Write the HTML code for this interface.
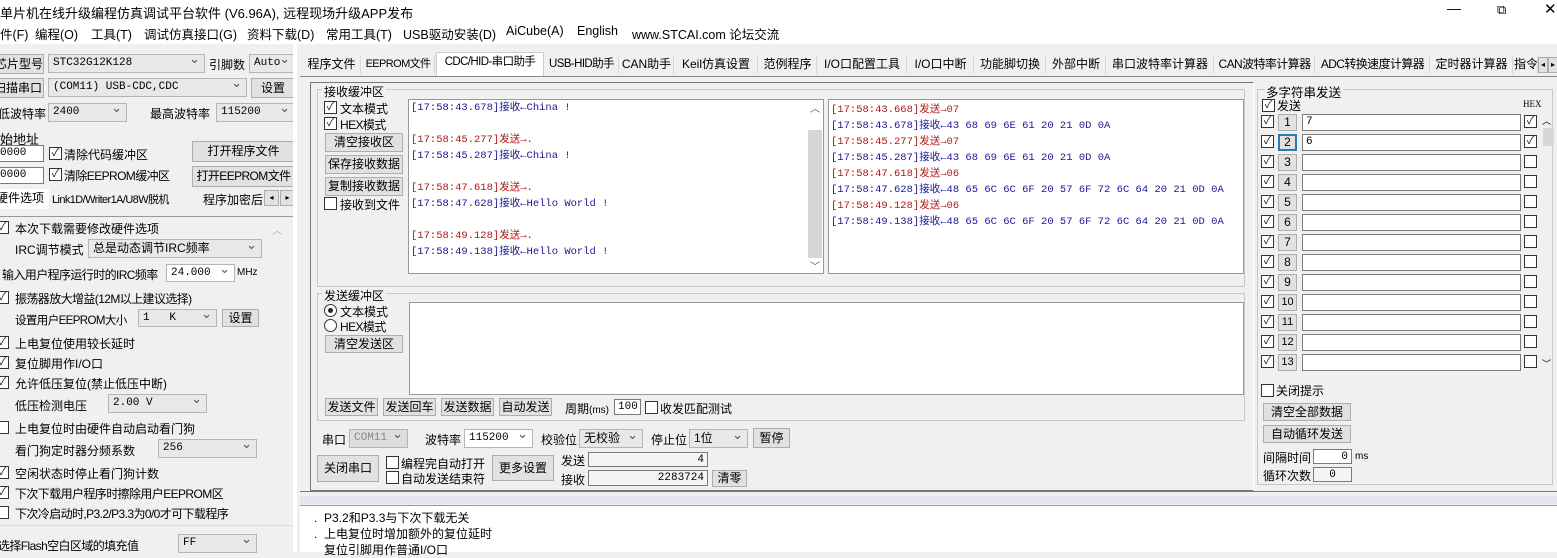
<!DOCTYPE html>
<html><head><meta charset="utf-8"><style>
*{margin:0;padding:0;box-sizing:border-box}
body{width:1557px;height:552px;overflow:hidden;background:#f0f0f0;font-family:"Liberation Sans","Noto Sans CJK SC",sans-serif;font-size:12px;color:#000;position:relative}
.a{position:absolute;white-space:nowrap}
.btn{position:absolute;background:#e1e1e1;border:1px solid #adadad;text-align:center;white-space:nowrap;line-height:16px}
.cb{position:absolute;width:13px;height:13px;border:1px solid #333;background:#fff;font-size:11px;line-height:11px;text-align:center;color:#222}
.sel{position:absolute;background:#e8e8e8;border:1px solid #b5b5b5;padding-left:4px;line-height:17px;white-space:nowrap;font-family:"Liberation Mono","Noto Sans CJK SC",monospace;font-size:11px}
.sel:after{content:"⌄";position:absolute;right:4px;top:-4px;font-size:13px;color:#555}
.inp{position:absolute;background:#fff;border:1px solid #7a7a7a;line-height:14px;white-space:nowrap;font-family:"Liberation Mono",monospace;font-size:11px;padding:0 3px}
.tab{position:absolute;top:55px;height:19px;line-height:19px;background:#f0f0f0;border-right:1px solid #d8d8d8;text-align:center;white-space:nowrap}
.mono{font-family:"Liberation Mono","Noto Sans CJK SC",monospace;font-size:10.5px}
.r{color:#b01818}.b{color:#1a1a90}
.grp{position:absolute;border:1px solid #c8c8c8}
.n{letter-spacing:-0.6px}
</style></head><body>
<div class="a" style="left:0;top:0;width:1557px;height:44px;background:#fff"></div>
<div class="a" style="left:0;top:3px;font-size:13px">单片机在线升级编程仿真调试平台软件 (V6.96A), 远程现场升级APP发布</div>
<div class="a" style="left:1447px;top:0;font-size:14px">—</div>
<div class="a" style="left:1497px;top:2px;font-size:13px">⧉</div>
<div class="a" style="left:1544px;top:0;font-size:15px">✕</div>
<div class="a" style="left:0;top:24px;font-size:12.5px">件(F)</div>
<div class="a" style="left:35px;top:24px;font-size:12.5px">编程(O)</div>
<div class="a" style="left:91px;top:24px;font-size:12.5px">工具(T)</div>
<div class="a" style="left:144px;top:24px;font-size:12.5px">调试仿真接口(G)</div>
<div class="a" style="left:247px;top:24px;font-size:12.5px">资料下载(D)</div>
<div class="a" style="left:326px;top:24px;font-size:12.5px">常用工具(T)</div>
<div class="a" style="left:403px;top:24px;font-size:12.5px">USB驱动安装(D)</div>
<div class="a" style="left:506px;top:24px;font-size:12.5px">AiCube(A)</div>
<div class="a" style="left:577px;top:24px;font-size:12.5px">English</div>
<div class="a" style="left:632px;top:24px;font-size:12.5px">www.STCAI.com 论坛交流</div>

<!-- left panel -->
<div class="btn" style="left:-6px;top:54px;width:50px;height:20px;line-height:18px;font-size:12px">芯片型号</div>
<div class="sel" style="left:48px;top:54px;width:157px;height:19px">STC32G12K128</div>
<div class="a" style="left:209px;top:56px">引脚数</div>
<div class="sel" style="left:249px;top:54px;width:46px;height:19px">Auto</div>
<div class="btn" style="left:-8px;top:78px;width:52px;height:20px;line-height:18px">扫描串口</div>
<div class="sel" style="left:48px;top:78px;width:199px;height:19px">(COM11) USB-CDC,CDC</div>
<div class="btn" style="left:251px;top:78px;width:44px;height:20px;line-height:18px">设置</div>
<div class="a" style="left:-2px;top:105px">低波特率</div>
<div class="sel" style="left:48px;top:103px;width:79px;height:19px">2400</div>
<div class="a" style="left:150px;top:105px">最高波特率</div>
<div class="sel" style="left:216px;top:103px;width:79px;height:19px">115200</div>
<div class="a" style="left:0;top:129px;font-size:13px">始地址</div>
<div class="inp" style="left:-4px;top:145px;width:48px;height:17px;line-height:15px">0000</div>
<div class="cb" style="left:49px;top:147px">✓</div><div class="a" style="left:64px;top:146px">清除代码缓冲区</div>
<div class="btn" style="left:192px;top:141px;width:103px;height:21px;line-height:19px">打开程序文件</div>
<div class="inp" style="left:-4px;top:167px;width:48px;height:17px;line-height:15px">0000</div>
<div class="cb" style="left:49px;top:168px">✓</div><div class="a n" style="left:64px;top:167px">清除EEPROM缓冲区</div>
<div class="btn n" style="left:192px;top:166px;width:103px;height:21px;line-height:19px">打开EEPROM文件</div>
<div class="a" style="left:0;top:189px;width:49px;height:20px;background:#fff;line-height:19px;overflow:hidden"><span style="margin-left:-4px">硬件选项</span></div>
<div class="a n" style="left:52px;top:191px;font-size:11px">Link1D/Writer1A/U8W脱机</div>
<div class="a" style="left:203px;top:191px;width:60px;overflow:hidden">程序加密后</div>
<div class="btn" style="left:264px;top:190px;width:15px;height:16px;font-size:8px;line-height:14px">◂</div>
<div class="btn" style="left:280px;top:190px;width:15px;height:16px;font-size:8px;line-height:14px">▸</div>
<div class="grp" style="left:-2px;top:216px;width:297px;height:310px;border-color:#999 #ddd #ddd #999"></div>
<div class="a" style="left:272px;top:222px;color:#aaa;font-size:10px">︿</div>
<div class="cb" style="left:-4px;top:221px">✓</div><div class="a" style="left:15px;top:220px">本次下载需要修改硬件选项</div>
<div class="a" style="left:15px;top:241px">IRC调节模式</div>
<div class="sel" style="left:88px;top:239px;width:174px;height:19px;font-family:'Liberation Sans','Noto Sans CJK SC',sans-serif;font-size:12px">总是动态调节IRC频率</div>
<div class="a n" style="left:2px;top:266px">输入用户程序运行时的IRC频率</div>
<div class="sel" style="left:166px;top:264px;width:69px;height:18px;background:#fff">24.000</div>
<div class="a" style="left:237px;top:267px;font-size:10px">MHz</div>
<div class="cb" style="left:-4px;top:291px">✓</div><div class="a n" style="left:15px;top:290px">振荡器放大增益(12M以上建议选择)</div>
<div class="a n" style="left:15px;top:312px;font-size:11.5px">设置用户EEPROM大小</div>
<div class="sel" style="left:138px;top:309px;width:79px;height:18px">1&nbsp;&nbsp; K</div>
<div class="btn" style="left:222px;top:309px;width:37px;height:18px">设置</div>
<div class="cb" style="left:-4px;top:336px">✓</div><div class="a" style="left:15px;top:335px">上电复位使用较长延时</div>
<div class="cb" style="left:-4px;top:356px">✓</div><div class="a" style="left:15px;top:355px">复位脚用作I/O口</div>
<div class="cb" style="left:-4px;top:376px">✓</div><div class="a" style="left:15px;top:375px">允许低压复位(禁止低压中断)</div>
<div class="a" style="left:15px;top:397px">低压检测电压</div>
<div class="sel" style="left:108px;top:394px;width:99px;height:19px">2.00 V</div>
<div class="cb" style="left:-4px;top:421px"></div><div class="a" style="left:15px;top:420px">上电复位时由硬件自动启动看门狗</div>
<div class="a" style="left:15px;top:442px">看门狗定时器分频系数</div>
<div class="sel" style="left:158px;top:439px;width:99px;height:19px">256</div>
<div class="cb" style="left:-4px;top:466px">✓</div><div class="a" style="left:15px;top:465px">空闲状态时停止看门狗计数</div>
<div class="cb" style="left:-4px;top:486px">✓</div><div class="a n" style="left:15px;top:485px">下次下载用户程序时擦除用户EEPROM区</div>
<div class="cb" style="left:-4px;top:506px"></div><div class="a n" style="left:15px;top:505px">下次冷启动时,P3.2/P3.3为0/0才可下载程序</div>
<div class="a n" style="left:-2px;top:537px">选择Flash空白区域的填充值</div>
<div class="sel" style="left:178px;top:534px;width:79px;height:19px">FF</div>
<div class="a" style="left:293px;top:44px;width:4px;height:508px;background:#fff"></div>

<!-- tabs -->
<div class="a" style="left:300px;top:76px;width:1257px;height:1px;background:#888"></div>
<div class="tab" style="left:303px;width:58px">程序文件</div>
<div class="tab n" style="left:362px;width:73px;font-size:11px">EEPROM文件</div>
<div class="tab n" style="left:436px;top:52px;height:24px;width:108px;background:#fff;border:1px solid #ccc;border-bottom:none;font-size:11.5px">CDC/HID-串口助手</div>
<div class="tab n" style="left:545px;width:74px;font-size:11.5px">USB-HID助手</div>
<div class="tab" style="left:620px;width:54px">CAN助手</div>
<div class="tab" style="left:675px;width:83px">Keil仿真设置</div>
<div class="tab" style="left:759px;width:58px">范例程序</div>
<div class="tab" style="left:818px;width:89px">I/O口配置工具</div>
<div class="tab" style="left:908px;width:66px">I/O口中断</div>
<div class="tab" style="left:975px;width:71px">功能脚切换</div>
<div class="tab" style="left:1047px;width:59px">外部中断</div>
<div class="tab" style="left:1107px;width:107px">串口波特率计算器</div>
<div class="tab n" style="left:1215px;width:100px">CAN波特率计算器</div>
<div class="tab n" style="left:1316px;width:114px">ADC转换速度计算器</div>
<div class="tab" style="left:1431px;width:82px">定时器计算器</div>
<div class="tab" style="left:1514px;width:24px;overflow:hidden">指令</div>
<div class="btn" style="left:1538px;top:57px;width:10px;height:16px;font-size:8px;line-height:14px">◂</div>
<div class="btn" style="left:1548px;top:57px;width:10px;height:16px;font-size:8px;line-height:14px">▸</div>

<!-- main frame -->
<div class="grp" style="left:310px;top:82px;width:944px;height:409px;border-color:#777 #fff #777 #777"></div>
<div class="grp" style="left:317px;top:89px;width:928px;height:198px"></div>
<div class="a" style="left:322px;top:83px;background:#f0f0f0;padding:0 2px">接收缓冲区</div>
<div class="cb" style="left:324px;top:101px">✓</div><div class="a" style="left:340px;top:100px">文本模式</div>
<div class="cb" style="left:324px;top:117px">✓</div><div class="a n" style="left:340px;top:116px">HEX模式</div>
<div class="btn" style="left:325px;top:133px;width:78px;height:19px">清空接收区</div>
<div class="btn" style="left:325px;top:155px;width:78px;height:19px">保存接收数据</div>
<div class="btn" style="left:325px;top:177px;width:78px;height:19px">复制接收数据</div>
<div class="cb" style="left:324px;top:197px"></div><div class="a" style="left:340px;top:196px">接收到文件</div>
<div class="a" style="left:408px;top:99px;width:416px;height:175px;background:#fff;border:1px solid #999"></div>
<div class="a" style="left:808px;top:130px;width:14px;height:128px;background:#d6d6d6"></div>
<div class="a" style="left:810px;top:100px;font-size:10px;color:#555">︿</div>
<div class="a" style="left:810px;top:258px;font-size:10px;color:#555">﹀</div>
<div class="a mono" style="left:411px;top:100px;line-height:16px">
<span class="b">[17:58:43.678]接收←China !</span><br><br>
<span class="r">[17:58:45.277]发送→.</span><br><span class="b">[17:58:45.287]接收←China !</span><br><br>
<span class="r">[17:58:47.618]发送→.</span><br><span class="b">[17:58:47.628]接收←Hello World !</span><br><br>
<span class="r">[17:58:49.128]发送→.</span><br><span class="b">[17:58:49.138]接收←Hello World !</span></div>
<div class="a" style="left:828px;top:99px;width:416px;height:175px;background:#fff;border:1px solid #999"></div>
<div class="a mono" style="left:831px;top:102px;line-height:16px">
<span class="r">[17:58:43.668]发送→07</span><br><span class="b">[17:58:43.678]接收←43 68 69 6E 61 20 21 0D 0A</span><br>
<span class="r">[17:58:45.277]发送→07</span><br><span class="b">[17:58:45.287]接收←43 68 69 6E 61 20 21 0D 0A</span><br>
<span class="r">[17:58:47.618]发送→06</span><br><span class="b">[17:58:47.628]接收←48 65 6C 6C 6F 20 57 6F 72 6C 64 20 21 0D 0A</span><br>
<span class="r">[17:58:49.128]发送→06</span><br><span class="b">[17:58:49.138]接收←48 65 6C 6C 6F 20 57 6F 72 6C 64 20 21 0D 0A</span></div>

<div class="grp" style="left:317px;top:293px;width:928px;height:128px"></div>
<div class="a" style="left:322px;top:287px;background:#f0f0f0;padding:0 2px">发送缓冲区</div>
<div class="a" style="left:324px;top:304px;width:13px;height:13px;border:1px solid #333;border-radius:50%;background:#fff"><div style="margin:3px;width:5px;height:5px;border-radius:50%;background:#222"></div></div><div class="a" style="left:340px;top:303px">文本模式</div>
<div class="a" style="left:324px;top:319px;width:13px;height:13px;border:1px solid #333;border-radius:50%;background:#fff"></div><div class="a n" style="left:340px;top:318px">HEX模式</div>
<div class="btn" style="left:325px;top:335px;width:78px;height:18px">清空发送区</div>
<div class="a" style="left:409px;top:302px;width:835px;height:93px;background:#fff;border:1px solid #999"></div>
<div class="btn" style="left:325px;top:398px;width:53px;height:18px">发送文件</div>
<div class="btn" style="left:383px;top:398px;width:53px;height:18px">发送回车</div>
<div class="btn" style="left:441px;top:398px;width:53px;height:18px">发送数据</div>
<div class="btn" style="left:499px;top:398px;width:53px;height:18px">自动发送</div>
<div class="a" style="left:565px;top:400px">周期<span style="font-size:10px">(ms)</span></div>
<div class="inp" style="left:614px;top:399px;width:27px;height:16px;text-align:center">100</div>
<div class="cb" style="left:645px;top:401px"></div><div class="a" style="left:660px;top:400px">收发匹配测试</div>

<div class="a" style="left:322px;top:431px">串口</div>
<div class="sel" style="left:349px;top:429px;width:59px;height:19px;color:#888;background:#ddd">COM11</div>
<div class="a" style="left:425px;top:431px">波特率</div>
<div class="sel" style="left:464px;top:429px;width:69px;height:19px;background:#fff">115200</div>
<div class="a" style="left:541px;top:431px">校验位</div>
<div class="sel" style="left:579px;top:429px;width:64px;height:19px;font-family:'Liberation Sans','Noto Sans CJK SC';font-size:12px">无校验</div>
<div class="a" style="left:651px;top:431px">停止位</div>
<div class="sel" style="left:689px;top:429px;width:59px;height:19px;font-family:'Liberation Sans','Noto Sans CJK SC';font-size:12px">1位</div>
<div class="btn" style="left:753px;top:428px;width:37px;height:20px;line-height:18px">暂停</div>
<div class="btn" style="left:317px;top:455px;width:62px;height:27px;line-height:25px">关闭串口</div>
<div class="cb" style="left:386px;top:456px"></div><div class="a" style="left:401px;top:455px">编程完自动打开</div>
<div class="cb" style="left:386px;top:471px"></div><div class="a" style="left:401px;top:470px">自动发送结束符</div>
<div class="btn" style="left:492px;top:455px;width:62px;height:26px;line-height:24px">更多设置</div>
<div class="a" style="left:561px;top:452px">发送</div>
<div class="inp" style="left:588px;top:452px;width:120px;height:15px;text-align:right;background:#f4f4f4">4</div>
<div class="a" style="left:561px;top:471px">接收</div>
<div class="inp" style="left:588px;top:470px;width:120px;height:16px;text-align:right;background:#f4f4f4">2283724</div>
<div class="btn" style="left:712px;top:470px;width:35px;height:17px;line-height:15px">清零</div>

<!-- right group -->
<div class="grp" style="left:1257px;top:89px;width:296px;height:396px"></div>
<div class="a" style="left:1264px;top:82px;background:#f0f0f0;padding:0 2px;font-size:12.5px">多字符串发送</div>
<div class="cb" style="left:1262px;top:99px">✓</div><div class="a" style="left:1277px;top:97px">发送</div>
<div class="a" style="left:1523px;top:99px;font-size:9px;font-family:'Liberation Serif'">HEX</div>
<div class="a" style="left:1543px;top:128px;width:11px;height:18px;background:#d6d6d6"></div>
<div class="a" style="left:1542px;top:114px;font-size:9px">︿</div>
<div class="a" style="left:1542px;top:357px;font-size:9px">﹀</div>
<div class="cb" style="left:1261px;top:115px">✓</div><div class="btn" style="left:1278px;top:114px;width:19px;height:17px;line-height:15px">1</div><div class="inp" style="left:1302px;top:114px;width:219px;height:17px">7</div><div class="cb" style="left:1524px;top:115px">✓</div>
<div class="cb" style="left:1261px;top:135px">✓</div><div class="btn" style="left:1278px;top:134px;width:19px;height:17px;line-height:13px;border:2px solid #2a7ab0">2</div><div class="inp" style="left:1302px;top:134px;width:219px;height:17px">6</div><div class="cb" style="left:1524px;top:135px">✓</div>
<div class="cb" style="left:1261px;top:155px">✓</div><div class="btn" style="left:1278px;top:154px;width:19px;height:17px;line-height:15px">3</div><div class="inp" style="left:1302px;top:154px;width:219px;height:17px"></div><div class="cb" style="left:1524px;top:155px"></div>
<div class="cb" style="left:1261px;top:175px">✓</div><div class="btn" style="left:1278px;top:174px;width:19px;height:17px;line-height:15px">4</div><div class="inp" style="left:1302px;top:174px;width:219px;height:17px"></div><div class="cb" style="left:1524px;top:175px"></div>
<div class="cb" style="left:1261px;top:195px">✓</div><div class="btn" style="left:1278px;top:194px;width:19px;height:17px;line-height:15px">5</div><div class="inp" style="left:1302px;top:194px;width:219px;height:17px"></div><div class="cb" style="left:1524px;top:195px"></div>
<div class="cb" style="left:1261px;top:215px">✓</div><div class="btn" style="left:1278px;top:214px;width:19px;height:17px;line-height:15px">6</div><div class="inp" style="left:1302px;top:214px;width:219px;height:17px"></div><div class="cb" style="left:1524px;top:215px"></div>
<div class="cb" style="left:1261px;top:235px">✓</div><div class="btn" style="left:1278px;top:234px;width:19px;height:17px;line-height:15px">7</div><div class="inp" style="left:1302px;top:234px;width:219px;height:17px"></div><div class="cb" style="left:1524px;top:235px"></div>
<div class="cb" style="left:1261px;top:255px">✓</div><div class="btn" style="left:1278px;top:254px;width:19px;height:17px;line-height:15px">8</div><div class="inp" style="left:1302px;top:254px;width:219px;height:17px"></div><div class="cb" style="left:1524px;top:255px"></div>
<div class="cb" style="left:1261px;top:275px">✓</div><div class="btn" style="left:1278px;top:274px;width:19px;height:17px;line-height:15px">9</div><div class="inp" style="left:1302px;top:274px;width:219px;height:17px"></div><div class="cb" style="left:1524px;top:275px"></div>
<div class="cb" style="left:1261px;top:295px">✓</div><div class="btn" style="left:1278px;top:294px;width:19px;height:17px;line-height:15px;font-size:11px">10</div><div class="inp" style="left:1302px;top:294px;width:219px;height:17px"></div><div class="cb" style="left:1524px;top:295px"></div>
<div class="cb" style="left:1261px;top:315px">✓</div><div class="btn" style="left:1278px;top:314px;width:19px;height:17px;line-height:15px;font-size:11px">11</div><div class="inp" style="left:1302px;top:314px;width:219px;height:17px"></div><div class="cb" style="left:1524px;top:315px"></div>
<div class="cb" style="left:1261px;top:335px">✓</div><div class="btn" style="left:1278px;top:334px;width:19px;height:17px;line-height:15px;font-size:11px">12</div><div class="inp" style="left:1302px;top:334px;width:219px;height:17px"></div><div class="cb" style="left:1524px;top:335px"></div>
<div class="cb" style="left:1261px;top:355px">✓</div><div class="btn" style="left:1278px;top:354px;width:19px;height:17px;line-height:15px;font-size:11px">13</div><div class="inp" style="left:1302px;top:354px;width:219px;height:17px"></div><div class="cb" style="left:1524px;top:355px"></div>
<div class="cb" style="left:1261px;top:384px"></div><div class="a" style="left:1276px;top:382px">关闭提示</div>
<div class="btn" style="left:1263px;top:403px;width:88px;height:18px">清空全部数据</div>
<div class="btn" style="left:1263px;top:425px;width:88px;height:18px">自动循环发送</div>
<div class="a" style="left:1263px;top:449px">间隔时间</div>
<div class="inp" style="left:1313px;top:449px;width:39px;height:15px;text-align:right">0</div>
<div class="a" style="left:1355px;top:451px;font-size:10px">ms</div>
<div class="a" style="left:1263px;top:467px">循环次数</div>
<div class="inp" style="left:1313px;top:467px;width:39px;height:15px;text-align:center;background:#f4f4f4">0</div>

<!-- bottom -->
<div class="a" style="left:300px;top:491px;width:1257px;height:1px;background:#777"></div>
<div class="a" style="left:300px;top:496px;width:1257px;height:8px;background:#e4e8ee"></div>
<div class="a" style="left:300px;top:505px;width:1257px;height:1px;background:#999"></div>
<div class="a" style="left:300px;top:506px;width:1257px;height:46px;background:#fff"></div>
<div class="a" style="left:314px;top:510px;line-height:16px">.&nbsp;&nbsp;P3.2和P3.3与下次下载无关<br>.&nbsp;&nbsp;上电复位时增加额外的复位延时<br>&nbsp;&nbsp;&nbsp;复位引脚用作普通I/O口</div>
</body></html>
